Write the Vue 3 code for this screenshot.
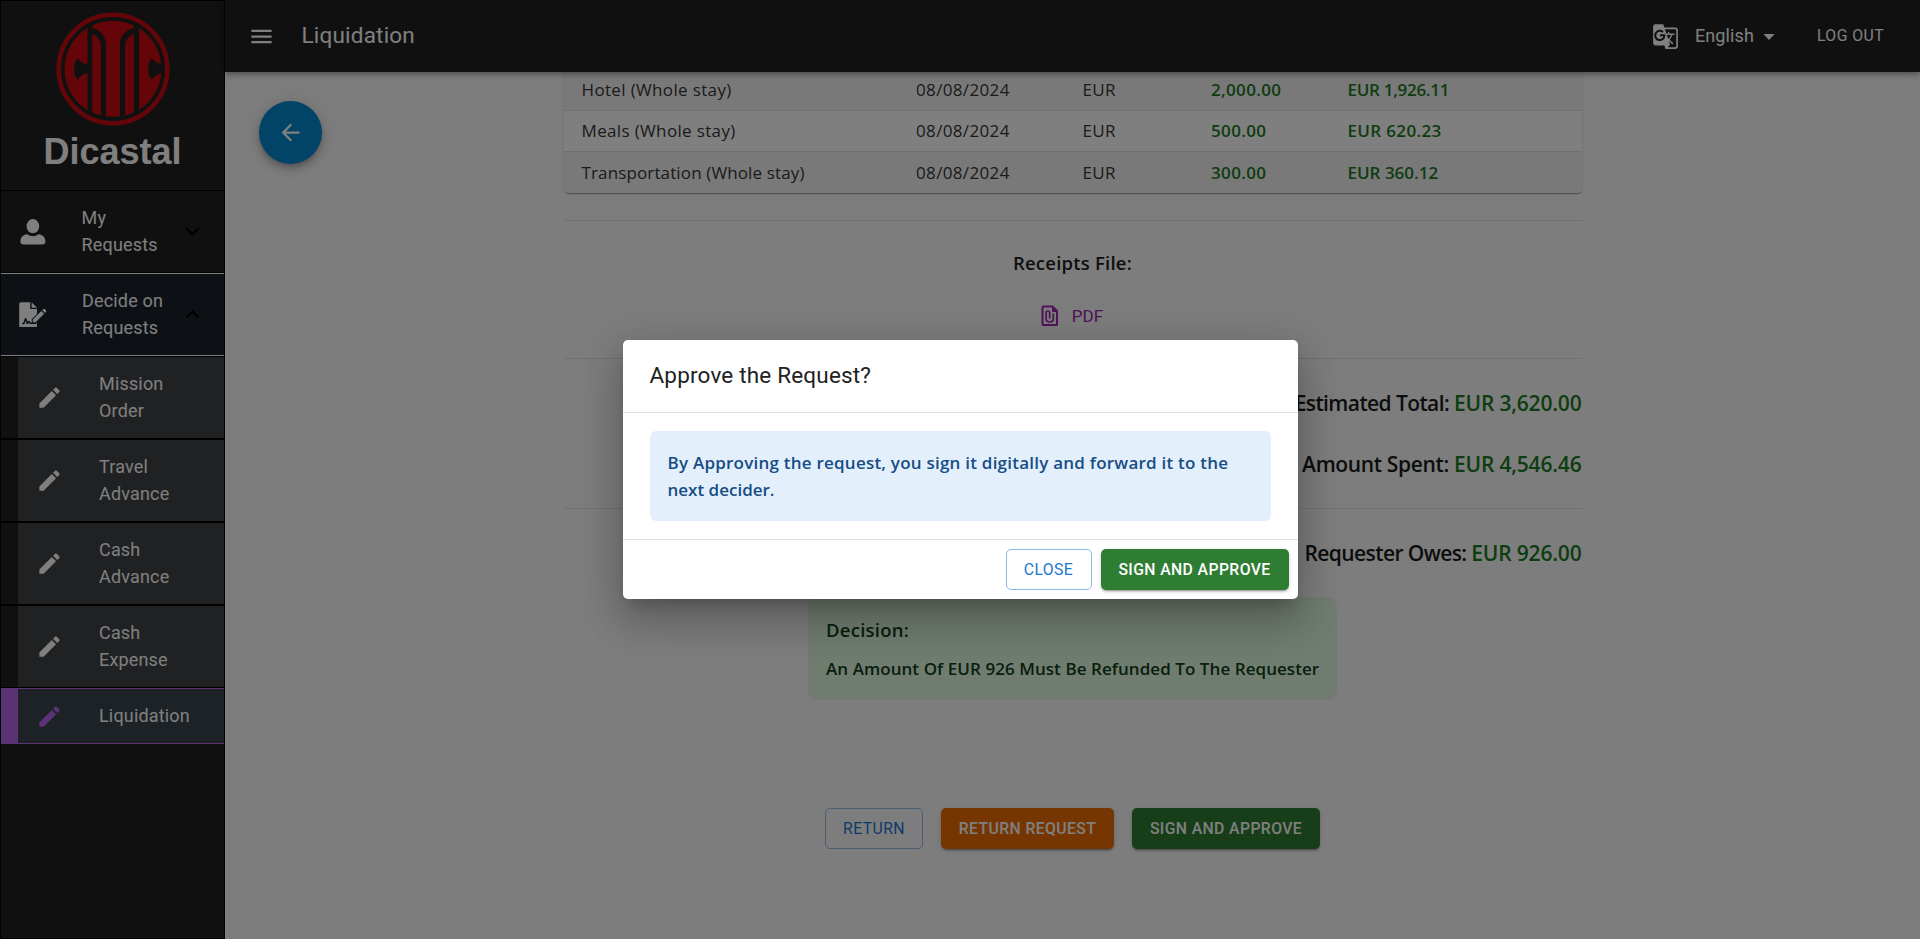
<script setup>
const editPath = 'M3 17.25V21h3.75L17.81 9.94l-3.75-3.75L3 17.25zM20.71 7.04c.39-.39.39-1.02 0-1.41l-2.34-2.34a.9959.9959 0 0 0-1.41 0l-1.83 1.83 3.75 3.75 1.83-1.83z'
const subItems = [
  { a: 'Mission', b: 'Order' },
  { a: 'Travel', b: 'Advance' },
  { a: 'Cash', b: 'Advance' },
  { a: 'Cash', b: 'Expense' },
]
const rows = [
  { key: 'hotel', name: 'Hotel (Whole stay)', date: '08/08/2024', cur: 'EUR', amount: '2,000.00', total: 'EUR 1,926.11' },
  { key: 'meals', name: 'Meals (Whole stay)', date: '08/08/2024', cur: 'EUR', amount: '500.00', total: 'EUR 620.23' },
  { key: 'transport', name: 'Transportation (Whole stay)', date: '08/08/2024', cur: 'EUR', amount: '300.00', total: 'EUR 360.12' },
]
</script>

<template>
  <div class="page">
    <aside class="sidebar">
      <div class="brand">
        <svg class="logo" viewBox="0 0 114 114">
          <defs>
            <clipPath id="disc"><circle cx="57" cy="57" r="48.5" /></clipPath>
          </defs>
          <circle cx="57" cy="57" r="54.3" fill="none" stroke="#c80c12" stroke-width="4.6" />
          <g clip-path="url(#disc)" fill="#c80c12">
            <path d="M5 5H31.500V52.500C28 52 24.500 50.500 22 46.500C17 49 17 65 22 67.500C24.500 63.500 28 61.500 31.500 61V110H5Z" />
            <path d="M83.200 5H110V52.500C103 52 98.500 50 96 46.500C91 49 91 65 96 67.500C98.500 63.500 103 61.500 110 60.500V110H83.200Z" />
            <path d="M36.200 13.800C46 7.500 68 7.500 77.800 13.800V15.800C69 18.500 63.900 24 63.900 33V104.500H49.900V33C49.900 24 45 18.500 36.200 15.800Z" />
            <path d="M36.200 22C41.500 24 44.900 28.500 44.900 35V103.500L36.200 100.500Z" />
            <path d="M77.900 22C72.500 24 69.100 28.500 69.100 35V103.500L77.900 100.500Z" />
          </g>
        </svg>
        <div class="brand-name">Dicastal</div>
      </div>
      <div class="item">
        <svg class="ic-user" viewBox="0 0 26 26"><ellipse cx="12.900" cy="7.200" rx="6.300" ry="7.100" /><path d="M.4 22.500C.4 18.500 3 15.600 7.200 15.200C9 16.500 11 17.200 12.900 17.200S16.800 16.500 18.600 15.200C22.800 15.600 25.400 18.500 25.400 22.500C25.400 24.500 24.200 25.500 22.200 25.500H3.600C1.600 25.500 .4 24.500 .4 22.500Z" /></svg>
        <div class="label">My<br>Requests</div>
        <svg class="chev" viewBox="0 0 24 24"><path d="M7.410 8.590 12 13.170l4.590-4.580L18 10l-6 6-6-6 1.410-1.410z" /></svg>
      </div>
      <div class="item open">
        <svg class="ic-sign" viewBox="0 0 28 26">
          <path d="M2 .3H11.200V7H18V12L12.700 17.200V20.600L11.400 20.700C10.700 18.400 9.300 18.300 8.600 19.900L7.700 16.900C7.200 15.700 6 15.700 5.600 16.900L4.400 20.800H3.200V22.200H5.400L6.600 18.700L7.600 22H8.800L9.900 20.800L10.600 22H16.600L18 20.700V24.300Q18 25 17.300 25H1Q.2 25 .2 24.200V1.800Q.2 .3 2 .3Z" />
          <path d="M12.600 .3 18 5.700H12.600Z" />
          <path d="M13.800 17.400 22.300 8.900 25.200 11.800 16.700 20.300H13.800ZM23.200 8 24.300 6.900Q25 6.400 25.700 7L27.100 8.400Q27.600 9.100 27.100 9.800L26 10.900Z" />
        </svg>
        <div class="label">Decide on<br>Requests</div>
        <svg class="chev" viewBox="0 0 24 24"><path d="M12 8l-6 6 1.410 1.410L12 10.830l4.590 4.580L18 14l-6-6z" /></svg>
      </div>
      <div v-for="(s, i) in subItems" :key="i" class="item sub">
        <svg class="ic-edit" viewBox="0 0 24 24"><path :d="editPath" /></svg>
        <div class="label">{{ s.a }}<br>{{ s.b }}</div>
      </div>
      <div class="item sub active">
        <svg class="ic-edit" viewBox="0 0 24 24"><path :d="editPath" /></svg>
        <div class="label">Liquidation</div>
      </div>
    </aside>

    <div class="main">
      <header class="appbar">
        <svg class="ic-menu" viewBox="0 0 24 24"><path d="M3 18h18v-2H3v2zm0-5h18v-2H3v2zm0-7v2h18V6H3z" /></svg>
        <div class="title">Liquidation</div>
        <svg class="ic-lang" viewBox="0 0 24 24"><path d="M21 4H11l-1-3H3c-1.100 0-2 .9-2 2v15c0 1.100.9 2 2 2h8l1 3h9c1.100 0 2-.9 2-2V6c0-1.100-.9-2-2-2zM7 16c-2.760 0-5-2.240-5-5s2.240-5 5-5c1.350 0 2.480.5 3.350 1.300L9.030 8.570c-.38-.36-1.040-.78-2.030-.78-1.740 0-3.150 1.440-3.150 3.210S5.260 14.210 7 14.210c2.010 0 2.840-1.440 2.920-2.410H7v-1.710h4.680c.07.31.12.61.12 1.020C11.800 13.970 9.890 16 7 16zm6.170-5.420h3.700c-.43 1.250-1.110 2.430-2.050 3.470-.31-.35-.6-.72-.86-1.100l-.79-2.370zm8.330 9.920c0 .55-.45 1-1 1H14l2-2.500-1.040-3.100 3.100 3.100.92-.92-3.300-3.250.02-.02c1.130-1.250 1.930-2.690 2.400-4.220H20v-1.300h-4.530V8h-1.290v1.290h-1.440L11.460 5.500h9.040c.55 0 1 .45 1 1v14z" /></svg>
        <div class="lang">English</div>
        <svg class="ic-caret" viewBox="0 0 12 6"><path d="M.4 0H11.600L6 6Z" /></svg>
        <div class="logout">LOG OUT</div>
      </header>

      <button class="back"><svg viewBox="0 0 24 24"><path d="M20 11H7.830l5.590-5.590L12 4l-8 8 8 8 1.410-1.410L7.830 13H20v-2z" /></svg></button>

      <section class="content">
        <div class="table">
          <div v-for="r in rows" :key="r.key" class="row" :class="r.key">
            <span class="c-name">{{ r.name }}</span>
            <span class="c-date">{{ r.date }}</span>
            <span class="c-cur">{{ r.cur }}</span>
            <span class="c-amt">{{ r.amount }}</span>
            <span class="c-tot">{{ r.total }}</span>
          </div>
        </div>
        <div class="receipts">
          <div class="receipts-title">Receipts File:</div>
          <div class="pdf">
            <svg viewBox="0 0 18 22">
              <path d="M2.500 1.500H11.500L16 6V20H2.500Q1.500 20 1.500 19V2.500Q1.500 1.500 2.500 1.500Z" fill="none" stroke="currentColor" stroke-width="2" stroke-linejoin="round" />
              <path d="M11 1 17 7H11Z" fill="currentColor" />
              <path d="M12.300 8.500V13.500Q12.300 17 8.700 17T5.100 13.500V8Q5.100 6 6.900 6T8.700 8V13.500" fill="none" stroke="currentColor" stroke-width="1.700" />
            </svg>
            <span>PDF</span>
          </div>
        </div>
        <div class="totals">
          <p class="est">Estimated Total: <b>EUR 3,620.00</b></p>
          <p class="spent">Amount Spent: <b>EUR 4,546.46</b></p>
        </div>
        <p class="owes">Requester Owes: <b>EUR 926.00</b></p>
        <div class="decision">
          <div class="d-title">Decision:</div>
          <div class="d-text">An Amount Of EUR 926 Must Be Refunded To The Requester</div>
        </div>
        <div class="actions">
          <button class="btn outline w-return">RETURN</button>
          <button class="btn orange">RETURN REQUEST</button>
          <button class="btn green">SIGN AND APPROVE</button>
        </div>
      </section>
    </div>

    <div class="overlay">
      <div class="dialog">
        <div class="dlg-title">Approve the Request?</div>
        <div class="dlg-body">
          <div class="alert">
            <span class="l1">By Approving the request, you sign it digitally and forward it to the</span><br>
            <span class="l2">next decider.</span>
          </div>
        </div>
        <div class="dlg-actions">
          <button class="btn outline w-close">CLOSE</button>
          <button class="btn green">SIGN AND APPROVE</button>
        </div>
      </div>
    </div>
  </div>
</template>

<style>
body { margin: 0; overflow: hidden; }
</style>

<style scoped>
* { box-sizing: border-box; }
.page { position: relative; display: flex; width: 1920px; height: 939px; overflow: hidden; background: #fafafa; font-family: Roboto, sans-serif; }
svg { fill: currentColor; flex: none; display: block; }
.sidebar { width: 225px; height: 939px; background: #212121; border: 1px solid #000; color: #fff; flex: none; }
.brand { height: 189px; display: flex; flex-direction: column; align-items: center; padding-top: 11px; }
.logo { width: 114px; height: 114px; }
.brand-name { font: 700 36px/42px "Liberation Sans", sans-serif; margin-top: 5px; }
.item { height: 83px; border-top: 1px solid #000; border-bottom: 1px solid #000; display: flex; align-items: center; font-size: 18px; line-height: 27px; letter-spacing: .17px; }
.item .label { flex: 1; white-space: nowrap; padding-bottom: 1px; }
.ic-user { width: 26px; height: 26px; margin: 0 36px 0 18.500px; }
.ic-sign { width: 28px; height: 26px; margin: 0 35px 0 18px; }
.chev { width: 27px; height: 27px; margin-right: 18px; color: #000; }
.open { background: #1a222c; border-color: #fff; }
.sub { background: linear-gradient(90deg, #212121 17px, #404346 17px); }
.ic-edit { width: 27px; height: 27px; margin: 0 36px 0 35px; }
.sub.active { height: 56px; border-color: #bb66ee; background: linear-gradient(90deg, #bb66ee 17px, #38444c 17px); }
.active .ic-edit { color: #bb66ee; }
.main { position: relative; flex: 1; height: 939px; }
.appbar { position: relative; z-index: 2; height: 72px; background: #212121; color: #fff; display: flex; align-items: center; box-shadow: 0 2px 4px -1px rgba(0,0,0,.2), 0 4px 5px rgba(0,0,0,.14), 0 1px 10px rgba(0,0,0,.12); }
.ic-menu { width: 27px; height: 27px; margin-left: 23px; }
.title { font-size: 22.500px; letter-spacing: .2px; margin-left: 26.500px; padding-bottom: 2px; flex: 1; }
.ic-lang { width: 27px; height: 27px; }
.lang { font-size: 18px; letter-spacing: .1px; margin-left: 16px; padding-bottom: 2px; }
.ic-caret { width: 12px; height: 6px; margin: 2px 0 0 9px; }
.logout { font-size: 15.750px; letter-spacing: .45px; margin: 0 36px 0 42px; padding-bottom: 2px; }
.back { position: absolute; left: 34px; top: 101px; width: 63px; height: 63px; border: 0; border-radius: 50%; background: #0288d1; color: #fff; display: grid; place-items: center; padding: 0; box-shadow: 0 3px 5px -1px rgba(0,0,0,.2), 0 6px 10px rgba(0,0,0,.14), 0 1px 18px rgba(0,0,0,.12); }
.back svg { width: 27px; height: 27px; }
.content { width: 1018px; margin: -3px auto 0; font-family: "Open Sans", "Noto Sans", sans-serif; display: flex; flex-direction: column; align-items: center; }
.table { width: 100%; border-radius: 0 0 5px 5px; overflow: hidden; box-shadow: 0 2px 1px -1px rgba(0,0,0,.2), 0 1px 1px rgba(0,0,0,.14), 0 1px 3px rgba(0,0,0,.12); }
.row { display: grid; grid-template-columns: 334.500px 166.500px 128.500px 136.500px 1fr; height: 41px; padding-left: 18px; align-items: center; background: #f2f2f2; border-bottom: 1px solid #e0e0e0; font-size: 17px; line-height: 26px; letter-spacing: .35px; color: #33373b; }
.row:first-child { height: 42px; }
.row:nth-child(2) { background: #fff; }
.row:last-child { border-bottom: 0; }
.row span { white-space: nowrap; }
.c-amt, .c-tot { color: #1b7a22; font-weight: 600; }
.transport .c-name { letter-spacing: .13px; }
.hotel .c-tot { letter-spacing: -.28px; }
.transport .c-tot { letter-spacing: 0; }
.receipts { width: 100%; margin-top: 27px; height: 139px; border-top: 1px solid #e2e2e2; border-bottom: 1px solid #e2e2e2; display: flex; flex-direction: column; align-items: center; }
.receipts-title { margin-top: 28px; font-size: 18.500px; letter-spacing: .22px; line-height: 28px; font-weight: 600; color: #1c1c1c; }
.pdf { display: flex; align-items: center; margin: 27px 1px 0 0; height: 24px; gap: 13px; color: #9c27b0; font: 400 17px Roboto; }
.pdf svg { width: 18px; height: 22px; }
.totals { width: 100%; height: 150px; border-bottom: 1px solid #e2e2e2; }
p { margin: 0; text-align: right; font-size: 21px; letter-spacing: -.6px; line-height: 32px; font-weight: 600; color: #1a1a1a; white-space: nowrap; }
p b { font-weight: 600; color: #1b7a22; letter-spacing: -.18px; }
.est { padding-top: 28px; }
.spent { padding-top: 29px; letter-spacing: -.35px; }
.owes { width: 100%; padding-top: 28px; }
.decision { width: 529px; height: 103px; margin-top: 28px; border-radius: 9px; background: #e0f8e0; padding: 18px; color: #0f3f17; white-space: nowrap; font-weight: 600; }
.d-title { font-size: 18.500px; letter-spacing: .25px; line-height: 30px; }
.d-text { font-size: 17px; letter-spacing: .06px; line-height: 28px; margin-top: 10px; }
.actions { display: flex; margin-top: 108px; gap: 18px; }
.btn { height: 41px; width: 188px; border: 0; padding: 0; border-radius: 5px; font: 500 15.750px Roboto; letter-spacing: .4px; color: #fff; white-space: nowrap; box-shadow: 0 3px 1px -2px rgba(0,0,0,.2), 0 2px 2px rgba(0,0,0,.14), 0 1px 5px rgba(0,0,0,.12); }
.green { background: #2e7d32; }
.orange { background: #ed6c02; width: 173px; }
.outline { background: transparent; border: 1px solid #8cbae8; color: #1976d2; box-shadow: none; font-weight: 400; }
.w-return { width: 98px; }
.w-close { width: 86px; }
.overlay { position: absolute; inset: 0; z-index: 10; background: rgba(0,0,0,.5); display: flex; align-items: center; justify-content: center; }
.dialog { width: 675px; height: 259px; background: #fff; border-radius: 5px; box-shadow: 0 11px 15px -7px rgba(0,0,0,.2), 0 24px 38px 3px rgba(0,0,0,.14), 0 9px 46px 8px rgba(0,0,0,.12); display: flex; flex-direction: column; }
.dlg-title { height: 72px; padding-left: 27px; font-size: 22.500px; letter-spacing: .18px; line-height: 71px; color: #212121; }
.dlg-body { height: 128px; border-top: 1px solid #e0e0e0; border-bottom: 1px solid #e0e0e0; padding: 18px 27px; }
.alert { height: 90px; border-radius: 6px; background: #e3effb; padding: 18px; color: #164d86; font: 600 17px/27px "Open Sans", "Noto Sans", sans-serif; white-space: nowrap; }
.l1 { letter-spacing: .23px; }
.dlg-actions { display: flex; justify-content: flex-end; gap: 9px; padding: 9px; }
</style>
